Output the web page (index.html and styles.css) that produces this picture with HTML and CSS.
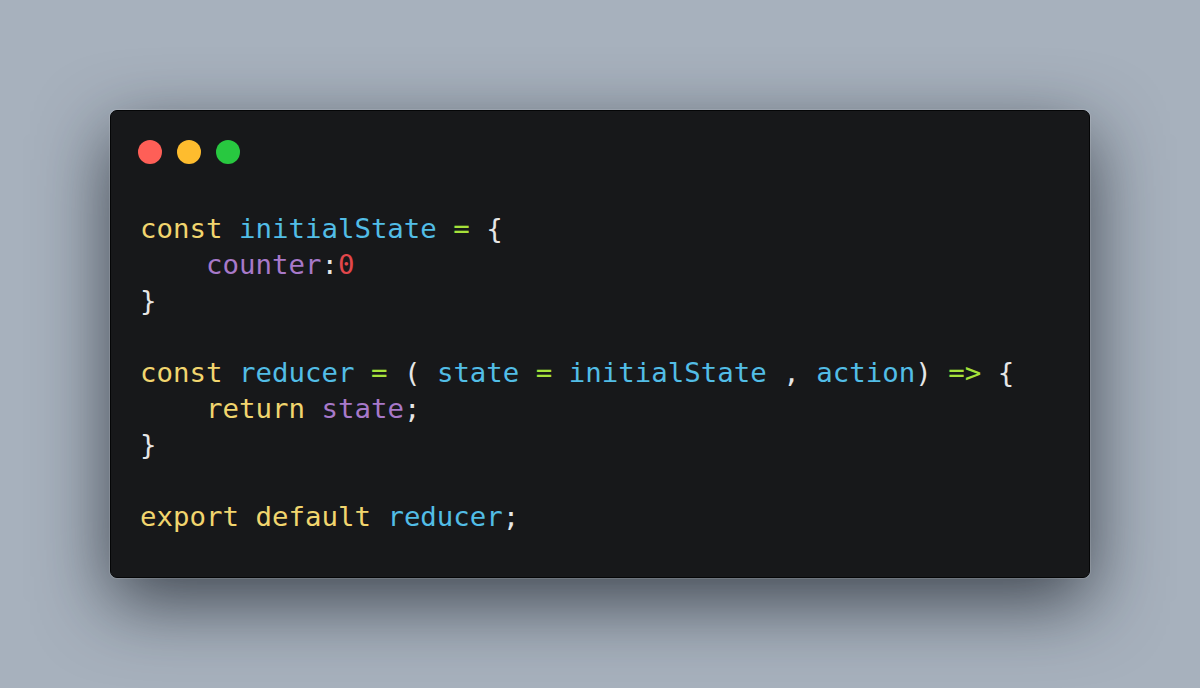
FILE: index.html
```html
<!DOCTYPE html>
<html>
<head>
<meta charset="utf-8">
<link rel="stylesheet" href="styles.css">
</head>
<body>
<div class="window">
  <div class="dots">
    <span class="dot red"></span>
    <span class="dot yellow"></span>
    <span class="dot green"></span>
  </div>
<pre class="code"><span class="kw">const</span> <span class="id">initialState</span> <span class="op">=</span> <span class="pn">{</span>
    <span class="prop">counter</span><span class="pn">:</span><span class="num">0</span>
<span class="pn">}</span>

<span class="kw">const</span> <span class="id">reducer</span> <span class="op">=</span> <span class="pn">(</span> <span class="id">state</span> <span class="op">=</span> <span class="id">initialState</span> <span class="pn">,</span> <span class="id">action</span><span class="pn">)</span> <span class="op">=&gt;</span> <span class="pn">{</span>
    <span class="kw">return</span> <span class="prop">state</span><span class="pn">;</span>
<span class="pn">}</span>

<span class="kw">export</span> <span class="kw">default</span> <span class="id">reducer</span><span class="pn">;</span></pre>
</div>
</body>
</html>
```

FILE: styles.css
```css
html, body {
  margin: 0;
  padding: 0;
}
body {
  width: 1200px;
  height: 688px;
  background: #a7b1bd;
  display: flex;
  align-items: center;
  justify-content: center;
  overflow: hidden;
}
.window {
  box-sizing: border-box;
  width: 980px;
  height: 468px;
  background: #17181a;
  border: 1px solid #050607;
  border-radius: 7px;
  box-shadow: 0 0 0 1px rgba(255,255,255,0.12), 0 24px 72px rgba(20, 26, 34, 0.7);
  padding: 29px 0 0 27px;
  display: flex;
  flex-direction: column;
}
.dots {
  display: flex;
  gap: 15px;
  height: 24px;
}
.dot {
  width: 24px;
  height: 24px;
  border-radius: 50%;
  display: block;
}
.red { background: #fe5f57; }
.yellow { background: #febc2e; }
.green { background: #28c840; }
.code {
  margin: 47px 0 0 2px;
  font-family: "DejaVu Sans Mono", monospace;
  font-size: 27.4px;
  line-height: 36px;
  color: #e6e6e6;
}
.kw { color: #f1d56e; }
.id { color: #52bde6; }
.op { color: #a6e13a; }
.pn { color: #e6e6e6; }
.prop { color: #a779c9; }
.num { color: #e2474b; }
```
